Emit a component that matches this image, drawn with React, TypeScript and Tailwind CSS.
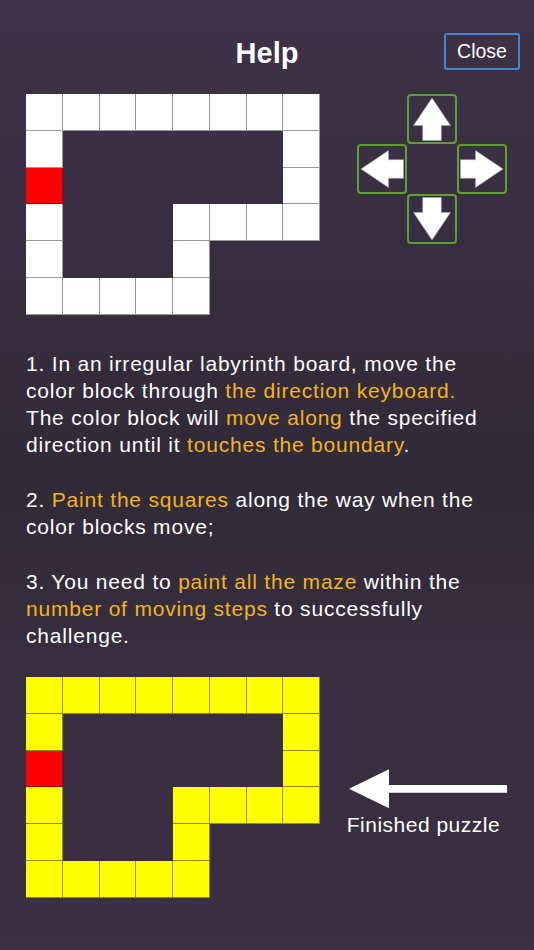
import React from "react";

const MAZE: number[][] = [
  [1, 1, 1, 1, 1, 1, 1, 1],
  [1, 0, 0, 0, 0, 0, 0, 1],
  [2, 0, 0, 0, 0, 0, 0, 1],
  [1, 0, 0, 0, 1, 1, 1, 1],
  [1, 0, 0, 0, 1, 0, 0, 0],
  [1, 1, 1, 1, 1, 0, 0, 0],
];

function Maze({ fill }: { fill: "white" | "yellow" }) {
  return (
    <div className="grid grid-cols-[repeat(8,36.75px)] grid-rows-[repeat(6,36.75px)] shrink-0">
      {MAZE.flat().map((v, i) => {
        if (v === 0) return <div key={i} />;
        if (v === 2)
          return <div key={i} className="bg-[#ff0000] border-r border-b border-black/30" />;
        return (
          <div
            key={i}
            className={
              fill === "white"
                ? "bg-white border-r border-b border-black/40"
                : "bg-[#ffff00] border-r border-b border-black/45"
            }
          />
        );
      })}
    </div>
  );
}

function ArrowUp({ rot }: { rot: number }) {
  return (
    <svg
      width="50"
      height="50"
      viewBox="0 0 50 50"
      className="-m-[2px] shrink-0"
      style={{ transform: `rotate(${rot}deg)` }}
    >
      <polygon
        points="25,4 43.5,31.5 34.3,31.5 34.3,46.5 15.7,46.5 15.7,31.5 6.5,31.5"
        fill="#ffffff"
        stroke="#a8a4ac"
        strokeWidth="0.6"
      />
    </svg>
  );
}

function PadButton({ rot }: { rot: number }) {
  return (
    <div className="w-[50px] h-[50px] border-2 border-[#5ea12e] rounded-[4px] flex items-center justify-center overflow-visible">
      <ArrowUp rot={rot} />
    </div>
  );
}

const O = ({ children }: { children: React.ReactNode }) => (
  <span className="text-[#f3b41b]">{children}</span>
);

export default function App() {
  return (
    <div
      className="w-full min-h-[950px] text-white bg-[linear-gradient(180deg,#3f3248_0%,#382e41_25%,#312a37_50%,#372e3f_70%,#3c3044_100%)]"
      style={{ fontFamily: '"Liberation Sans", Arial, sans-serif' }}
    >
      {/* Header */}
      <div className="grid grid-cols-[1fr_auto_1fr] items-start pt-[33px] h-[94px]">
        <div />
        <h1 className="mt-[6px] text-[29px] leading-[29px] font-bold">Help</h1>
        <div className="flex justify-end pr-[14px]">
          <button className="w-[76px] h-[37px] border-2 border-[#3f87d9] rounded-[3px] text-[19.5px] leading-none flex items-center justify-center text-white">
            Close
          </button>
        </div>
      </div>

      {/* Top row */}
      <div className="flex pl-[26px]">
        <Maze fill="white" />
        <div className="ml-[37px] grid grid-cols-[repeat(3,50px)] grid-rows-[repeat(3,50px)]">
          <div />
          <PadButton rot={0} />
          <div />
          <PadButton rot={-90} />
          <div />
          <PadButton rot={90} />
          <div />
          <PadButton rot={180} />
          <div />
        </div>
      </div>

      {/* Instructions */}
      <div className="mt-[35px] px-[26px] text-[21px] leading-[27.3px] tracking-[0.8px] whitespace-nowrap">
        <p>
          1. In an irregular labyrinth board, move the
          <br />
          color block through <O>the direction keyboard.</O>
          <br />
          The color block will <O>move along</O> the specified
          <br />
          direction until it <O>touches the boundary</O>.
        </p>
        <p className="mt-[27.3px]">
          2. <O>Paint the squares</O> along the way when the
          <br />
          color blocks move;
        </p>
        <p className="mt-[27.3px]">
          3. You need to <O>paint all the maze</O> within the
          <br />
          <O>number of moving steps</O> to successfully
          <br />
          challenge.
        </p>
      </div>

      {/* Bottom row */}
      <div className="flex pl-[26px] mt-[27.4px] pb-[52px]">
        <Maze fill="yellow" />
        <div className="ml-[29px] pt-[92px] flex flex-col">
          <svg width="158" height="40" viewBox="0 0 158 40">
            <polygon
              points="0,19.8 40,0.3 40,16 158,16 158,23.7 40,23.7 40,39.3"
              fill="#ffffff"
            />
          </svg>
          <div className="mt-[2px] -ml-[2.3px] text-[21px] leading-[27.3px] tracking-[0.5px] whitespace-nowrap">
            Finished puzzle
          </div>
        </div>
      </div>
    </div>
  );
}
